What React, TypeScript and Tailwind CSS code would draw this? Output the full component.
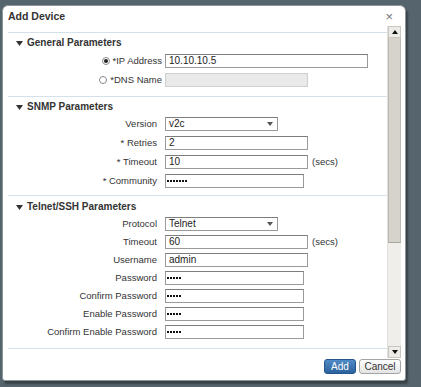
import React from 'react'

const font = { fontFamily: '"Liberation Sans", Arial, sans-serif' }

function Caret() {
  return (
    <svg width="7" height="5" viewBox="0 0 7 5" className="shrink-0">
      <polygon points="0,0 7,0 3.5,5" fill="#333" />
    </svg>
  )
}

function Heading({ title }: { title: string }) {
  return (
    <div className="flex items-center h-[12px] pl-[8px] gap-[4px]">
      <Caret />
      <span className="text-[10px] font-bold text-[#333] leading-none">{title}</span>
    </div>
  )
}

function Divider({ className = '' }: { className?: string }) {
  return <div className={`h-px bg-[#d3e2ea] ${className}`} />
}

function Label({ text }: { text: string }) {
  return (
    <div className="w-[149px] text-right text-[9.5px] text-[#333] leading-none shrink-0">{text}</div>
  )
}

function Dots({ count }: { count: number }) {
  return (
    <div className="flex gap-[1px]">
      {Array.from({ length: count }).map((_, i) => (
        <div key={i} className="w-[2px] h-[2px] bg-[#111]" />
      ))}
    </div>
  )
}

function TextBox({ value, width, dots, disabled }: { value?: string; width: number; dots?: number; disabled?: boolean }) {
  return (
    <div
      style={{ width }}
      className={`h-[14px] border flex items-center leading-none shrink-0 ${
        dots ? 'px-[1px]' : 'px-[3px]'
      } ${disabled ? 'bg-[#e9e9e9] border-[#cfcfcf]' : 'bg-white border-[#9a9a9a] border-t-[#7d7d7d]'}`}
    >
      {dots ? <Dots count={dots} /> : <span className="text-[10px] text-[#222]">{value}</span>}
    </div>
  )
}

function Select({ value }: { value: string }) {
  return (
    <div className="w-[113px] h-[14px] border border-[#9a9a9a] border-t-[#7d7d7d] bg-white flex items-center justify-between pl-[3px] pr-[4px] shrink-0">
      <span className="text-[10px] text-[#222] leading-none">{value}</span>
      <svg width="6" height="4" viewBox="0 0 6 4">
        <polygon points="0,0 6,0 3,4" fill="#555" />
      </svg>
    </div>
  )
}

function Row({ label, children, suffix }: { label: string; children: React.ReactNode; suffix?: string }) {
  return (
    <div className="flex items-center h-[14px]">
      <Label text={label} />
      <div className="ml-[8px] flex items-center">
        {children}
        {suffix && <span className="ml-[4px] text-[9.5px] text-[#333] leading-none">{suffix}</span>}
      </div>
    </div>
  )
}

function Radio({ checked }: { checked?: boolean }) {
  return (
    <div className="w-[8px] h-[8px] rounded-full border border-[#8a8a8a] bg-white flex items-center justify-center shrink-0">
      {checked && <div className="w-[4px] h-[4px] rounded-full bg-[#222]" />}
    </div>
  )
}

function RadioRow({ label, checked, children }: { label: string; checked?: boolean; children: React.ReactNode }) {
  return (
    <div className="flex items-center h-[14px]">
      <div className="w-[154px] flex items-center justify-end gap-[3px] shrink-0">
        <Radio checked={checked} />
        <span className="text-[9.5px] text-[#333] leading-none">{label}</span>
      </div>
      <div className="ml-[3px]">{children}</div>
    </div>
  )
}

function Scrollbar() {
  return (
    <div className="w-[14px] flex flex-col bg-[#efeeea] border-l border-[#e2e0da]">
      <div className="h-[12px] bg-[#ecebe7] border border-[#c9c7c0] flex items-center justify-center">
        <svg width="6" height="4" viewBox="0 0 6 4">
          <polygon points="0,4 6,4 3,0" fill="#111" />
        </svg>
      </div>
      <div className="h-[205px] bg-[#d6d3cc] border-x border-[#bdbab3] border-b border-b-[#a9a69f]" />
      <div className="flex-1" />
      <div className="h-[12px] bg-[#ecebe7] border border-[#c9c7c0] flex items-center justify-center">
        <svg width="6" height="4" viewBox="0 0 6 4">
          <polygon points="0,0 6,0 3,4" fill="#111" />
        </svg>
      </div>
    </div>
  )
}

export default function App() {
  return (
    <div style={font} className="w-[421px] h-[387px] bg-[#56646d] overflow-hidden">
      <div className="ml-[2px] mt-[5px] w-[404px] h-[376px] bg-white border border-[#8d969b] rounded-t-[6px] rounded-b-[3px] shadow-[2px_3px_2px_rgba(0,0,0,0.35)] flex flex-col">
        {/* Header */}
        <div className="h-[20px] flex items-center justify-between pl-[5px] pr-[12px]">
          <span className="text-[10.5px] font-bold text-[#333] leading-none">Add Device</span>
          <span className="text-[13px] text-[#777] leading-none">×</span>
        </div>

        {/* Body */}
        <div className="h-[332px] flex pr-[4px]">
          <div className="flex-1 flex flex-col pl-[5px]">
            <Divider className="mt-[6px]" />
            <div className="mt-[4px]"><Heading title="General Parameters" /></div>
            <div className="mt-[5px] flex flex-col gap-[5px]">
              <RadioRow label="*IP Address" checked>
                <TextBox value="10.10.10.5" width={203} />
              </RadioRow>
              <RadioRow label="*DNS Name">
                <TextBox width={143} disabled />
              </RadioRow>
            </div>
            <Divider className="mt-[9px]" />
            <div className="mt-[4px]"><Heading title="SNMP Parameters" /></div>
            <div className="mt-[4px] flex flex-col gap-[5px]">
              <Row label="Version"><Select value="v2c" /></Row>
              <Row label="* Retries"><TextBox value="2" width={143} /></Row>
              <Row label="* Timeout" suffix="(secs)"><TextBox value="10" width={143} /></Row>
              <Row label="* Community"><TextBox dots={7} width={139} /></Row>
            </div>
            <Divider className="mt-[7px]" />
            <div className="mt-[5px]"><Heading title="Telnet/SSH Parameters" /></div>
            <div className="mt-[4px] flex flex-col gap-[4px]">
              <Row label="Protocol"><Select value="Telnet" /></Row>
              <Row label="Timeout" suffix="(secs)"><TextBox value="60" width={143} /></Row>
              <Row label="Username"><TextBox value="admin" width={143} /></Row>
              <Row label="Password"><TextBox dots={5} width={139} /></Row>
              <Row label="Confirm Password"><TextBox dots={5} width={139} /></Row>
              <Row label="Enable Password"><TextBox dots={5} width={139} /></Row>
              <Row label="Confirm Enable Password"><TextBox dots={5} width={139} /></Row>
            </div>
            <Divider className="mt-[9px]" />
          </div>
          <Scrollbar />
        </div>

        {/* Footer */}
        <div className="flex justify-end gap-[3px] pr-[4px] mt-[1px]">
          <button className="w-[32px] h-[15px] rounded-[3px] border border-[#23548a] bg-gradient-to-b from-[#4f8bc6] to-[#2a629d] text-white text-[10px] leading-none">
            Add
          </button>
          <button className="w-[42px] h-[15px] rounded-[3px] border border-[#a3a3a3] bg-gradient-to-b from-white to-[#e4e4e4] text-[#333] text-[10px] leading-none">
            Cancel
          </button>
        </div>
      </div>
    </div>
  )
}
